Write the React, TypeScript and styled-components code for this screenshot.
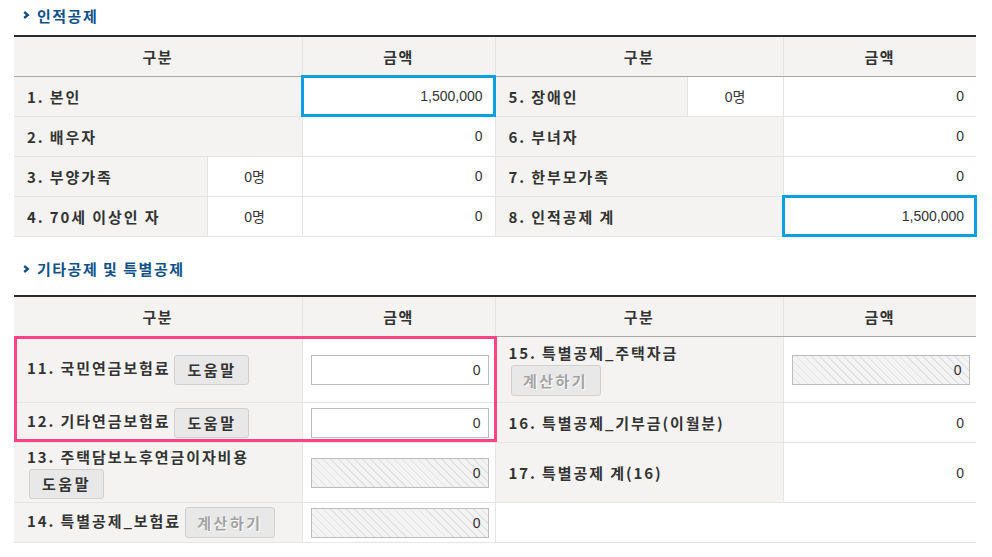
import React from 'react';
import styled, { createGlobalStyle } from 'styled-components';

const GlobalStyle = createGlobalStyle`
  html, body { margin: 0; padding: 0; background: #fff; }
  body { font-family: "Noto Sans CJK KR", "Noto Sans", sans-serif; color: #333; }
  * { box-sizing: border-box; }
`;

const Page = styled.div`
  width: 992px;
  padding: 0 16px 0 14px;
`;

const SectionTitle = styled.h2<{ $top: number; $bottom: number }>`
  display: flex;
  align-items: center;
  gap: 7px;
  height: 30px;
  margin: ${p => p.$top}px 0 ${p => p.$bottom}px 0;
  padding-left: 9px;
  font-family: "Noto Sans CJK KR", sans-serif;
  font-size: 15px;
  font-weight: 700;
  letter-spacing: 1.5px;
  color: #105288;
`;

const Chevron = () => (
  <svg width="7" height="8" viewBox="0 0 7 8" aria-hidden="true">
    <polyline points="1.2,1 4.8,4 1.2,7" fill="none" stroke="#105288" strokeWidth="2.4" />
  </svg>
);

const TableWrap = styled.div`
  position: relative;
`;

const Table = styled.table`
  width: 962px;
  border-collapse: collapse;
  table-layout: fixed;
  border-top: 2px solid #2b2b2b;
`;

const Col = styled.col<{ $w: number }>`
  width: ${p => p.$w}px;
`;

const Tr = styled.tr<{ $h: number }>`
  height: ${p => p.$h}px;
`;

const Th = styled.th`
  padding: 0;
  background: #f4f3f1;
  border-left: 1px solid #e6e5e3;
  border-bottom: 1px solid #a8a8a8;
  font-family: "Noto Sans CJK KR", sans-serif;
  font-size: 15px;
  font-weight: 700;
  letter-spacing: 1.5px;
  color: #333;
  text-align: center;
  &:first-child { border-left: none; }
`;

const Cell = styled.td<{ $kind: 'label' | 'num' | 'count' | 'field' | 'empty'; $focus?: boolean }>`
  padding: ${p =>
    p.$kind === 'label' ? '0 4px 0 13px' : p.$kind === 'num' ? '0 12px 0 0' : p.$kind === 'field' ? '0 7px 0 8px' : '0'};
  background: ${p => (p.$kind === 'label' ? '#f4f3f1' : '#fff')};
  border-left: 1px solid #e6e5e3;
  border-bottom: 1px solid #e6e5e3;
  vertical-align: middle;
  text-align: ${p => (p.$kind === 'num' ? 'right' : p.$kind === 'count' ? 'center' : 'left')};
  font-family: ${p =>
    p.$kind === 'label'
      ? '"Noto Sans CJK KR", sans-serif'
      : '"Liberation Sans", "Noto Sans CJK KR", sans-serif'};
  font-size: ${p => (p.$kind === 'label' ? '15px' : '14px')};
  font-weight: ${p => (p.$kind === 'label' ? 700 : 400)};
  letter-spacing: ${p => (p.$kind === 'label' ? '1.9px' : '0')};
  color: #333;
  white-space: nowrap;
  outline: ${p => (p.$focus ? '3px solid #0aa0e2' : 'none')};
  outline-offset: -2px;
  &:first-child { border-left: none; }
`;

const Btn = styled.button<{ $w: number; $muted?: boolean; $block?: boolean }>`
  display: ${p => (p.$block ? 'block' : 'inline-block')};
  width: ${p => p.$w}px;
  height: ${p => (p.$muted ? 31 : 30)}px;
  margin: ${p => (p.$block ? '2px 0 0 2px' : '0 0 0 4px')};
  padding: 0;
  vertical-align: middle;
  background: #e8e8e8;
  border: 1px solid #d0d0d0;
  border-radius: 3px;
  font-family: "Noto Sans CJK KR", sans-serif;
  font-size: 15px;
  font-weight: 700;
  letter-spacing: 2.5px;
  color: ${p => (p.$muted ? '#a3a3a3' : '#333')};
  text-shadow: ${p => (p.$muted ? '1px 1px 0 #fff' : 'none')};
`;

const Field = styled.div<{ $hatched?: boolean }>`
  display: flex;
  align-items: center;
  justify-content: flex-end;
  width: 178px;
  height: 30px;
  padding-right: 7px;
  border: 1px solid #bcbcbc;
  background: ${p =>
    p.$hatched
      ? 'repeating-linear-gradient(45deg, #f3f3f3 0px, #f3f3f3 4.5px, #e2e2e2 4.5px, #e2e2e2 5.6px)'
      : '#fff'};
  font-family: "Liberation Sans", sans-serif;
  font-size: 14px;
  color: #333;
`;

const Highlight = styled.div`
  position: absolute;
  left: 0;
  top: 41px;
  width: 483px;
  height: 106px;
  border: 3px solid #ff4384;
  pointer-events: none;
`;

const LabelLine = styled.div`
  line-height: 20px;
`;

export default function App() {
  return (
    <>
      <GlobalStyle />
      <Page>
        <SectionTitle $top={0} $bottom={5}>
          <Chevron />
          인적공제
        </SectionTitle>
        <Table>
          <colgroup>
            <Col $w={193} />
            <Col $w={95} />
            <Col $w={193} />
            <Col $w={192} />
            <Col $w={96} />
            <Col $w={193} />
          </colgroup>
          <thead>
            <Tr $h={40}>
              <Th colSpan={2}>구분</Th>
              <Th>금액</Th>
              <Th colSpan={2}>구분</Th>
              <Th>금액</Th>
            </Tr>
          </thead>
          <tbody>
            <Tr $h={40}>
              <Cell $kind="label" colSpan={2}>1. 본인</Cell>
              <Cell $kind="num" $focus>1,500,000</Cell>
              <Cell $kind="label">5. 장애인</Cell>
              <Cell $kind="count">0명</Cell>
              <Cell $kind="num">0</Cell>
            </Tr>
            <Tr $h={40}>
              <Cell $kind="label" colSpan={2}>2. 배우자</Cell>
              <Cell $kind="num">0</Cell>
              <Cell $kind="label" colSpan={2}>6. 부녀자</Cell>
              <Cell $kind="num">0</Cell>
            </Tr>
            <Tr $h={40}>
              <Cell $kind="label">3. 부양가족</Cell>
              <Cell $kind="count">0명</Cell>
              <Cell $kind="num">0</Cell>
              <Cell $kind="label" colSpan={2}>7. 한부모가족</Cell>
              <Cell $kind="num">0</Cell>
            </Tr>
            <Tr $h={40}>
              <Cell $kind="label">4. 70세 이상인 자</Cell>
              <Cell $kind="count">0명</Cell>
              <Cell $kind="num">0</Cell>
              <Cell $kind="label" colSpan={2}>8. 인적공제 계</Cell>
              <Cell $kind="num" $focus>1,500,000</Cell>
            </Tr>
          </tbody>
        </Table>

        <SectionTitle $top={17} $bottom={11}>
          <Chevron />
          기타공제 및 특별공제
        </SectionTitle>
        <TableWrap>
          <Table>
            <colgroup>
              <Col $w={288} />
              <Col $w={193} />
              <Col $w={288} />
              <Col $w={193} />
            </colgroup>
            <thead>
              <Tr $h={41}>
                <Th>구분</Th>
                <Th>금액</Th>
                <Th>구분</Th>
                <Th>금액</Th>
              </Tr>
            </thead>
            <tbody>
              <Tr $h={66}>
                <Cell $kind="label">
                  11. 국민연금보험료
                  <Btn $w={75}>도움말</Btn>
                </Cell>
                <Cell $kind="field">
                  <Field>0</Field>
                </Cell>
                <Cell $kind="label">
                  <LabelLine>15. 특별공제_주택자금</LabelLine>
                  <Btn $w={90} $muted $block>계산하기</Btn>
                </Cell>
                <Cell $kind="field">
                  <Field $hatched>0</Field>
                </Cell>
              </Tr>
              <Tr $h={40}>
                <Cell $kind="label">
                  12. 기타연금보험료
                  <Btn $w={75}>도움말</Btn>
                </Cell>
                <Cell $kind="field">
                  <Field>0</Field>
                </Cell>
                <Cell $kind="label">16. 특별공제_기부금(이월분)</Cell>
                <Cell $kind="num">0</Cell>
              </Tr>
              <Tr $h={60}>
                <Cell $kind="label">
                  <LabelLine>13. 주택담보노후연금이자비용</LabelLine>
                  <Btn $w={75} $block>도움말</Btn>
                </Cell>
                <Cell $kind="field">
                  <Field $hatched>0</Field>
                </Cell>
                <Cell $kind="label">17. 특별공제 계(16)</Cell>
                <Cell $kind="num">0</Cell>
              </Tr>
              <Tr $h={40}>
                <Cell $kind="label">
                  14. 특별공제_보험료
                  <Btn $w={90} $muted>계산하기</Btn>
                </Cell>
                <Cell $kind="field">
                  <Field $hatched>0</Field>
                </Cell>
                <Cell $kind="empty" colSpan={2} />
              </Tr>
            </tbody>
          </Table>
          <Highlight />
        </TableWrap>
      </Page>
    </>
  );
}
